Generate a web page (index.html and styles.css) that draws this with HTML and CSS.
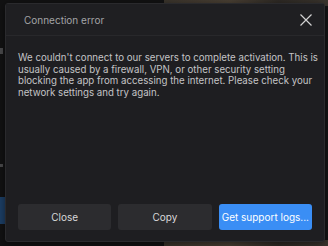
FILE: index.html
```html
<!DOCTYPE html>
<html lang="en">
<head>
    <meta charset="UTF-8">
    <meta name="viewport" content="width=device-width, initial-scale=1.0">
    <title>Connection error</title>
    <link rel="stylesheet" href="styles.css">
</head>
<body>
    <div class="app">
        <div class="sidebar">
            <div class="frag frag-a"></div>
            <div class="frag frag-b"></div>
            <div class="side-btn"></div>
        </div>
        <div class="canvas">
            <div class="photo"></div>
            <div class="canvas-mid"></div>
            <div class="photo"></div>
        </div>
    </div>

    <div class="dialog">
        <div class="dialog-header">
            <span class="dialog-title">Connection error</span>
            <button class="dialog-close" aria-label="Close">
                <svg width="12" height="12" viewBox="0 0 12 12">
                    <path d="M0.5 0.5 L11.5 11.5 M11.5 0.5 L0.5 11.5" stroke="#d2d2d2" stroke-width="1.2" fill="none"/>
                </svg>
            </button>
        </div>
        <div class="dialog-body">
            <p>We couldn't connect to our servers to complete activation. This is usually caused by a firewall, VPN, or other security setting blocking the app from accessing the internet. Please check your network settings and try again.</p>
        </div>
        <div class="dialog-actions">
            <button class="btn">Close</button>
            <button class="btn">Copy</button>
            <button class="btn btn-primary">Get support logs...</button>
        </div>
    </div>
</body>
</html>
```

FILE: styles.css
```css
* {
    margin: 0;
    padding: 0;
    box-sizing: border-box;
    font-family: Inter, 'Noto Sans', sans-serif;
}

body {
    width: 328px;
    height: 246px;
    background: #121213;
    overflow: hidden;
    position: relative;
}

.app {
    display: flex;
    height: 100%;
}

.sidebar {
    width: 164px;
    background: #121213;
}

.frag {
    width: 3px;
    height: 6px;
    background: #4a4a4c;
}

.frag-a {
    margin-top: 48px;
}

.frag-b {
    margin-top: 110px;
    height: 3px;
}

.side-btn {
    margin-top: 30px;
    width: 8px;
    height: 27px;
    background: #1d3f66;
}

.canvas {
    flex: 1;
    display: flex;
    flex-direction: column;
}

.photo {
    height: 6px;
    background: linear-gradient(90deg, #3a342c, #4a4034 40%, #2e2a25 70%, #3b352e);
}

.canvas-mid {
    flex: 1;
    background: #141415;
}

.dialog {
    position: absolute;
    left: 5px;
    top: 3px;
    width: 320px;
    height: 239px;
    background: #1e1e21;
    border: 1px solid #2a2a2d;
    border-radius: 3px;
    display: flex;
    flex-direction: column;
    box-shadow: 0 2px 8px rgba(0, 0, 0, 0.5);
}

.dialog-header {
    height: 32px;
    display: flex;
    align-items: center;
    justify-content: space-between;
    padding: 0 9px 0 18px;
    border-bottom: 1px solid #28282b;
    background: #1f1f22;
}

.dialog-title {
    color: #a3a3a6;
    font-size: 10px;
}

.dialog-close {
    background: none;
    border: none;
    width: 18px;
    height: 18px;
    display: flex;
    align-items: center;
    justify-content: center;
    margin-top: 1px;
}

.dialog-body {
    flex: 1;
    padding: 16px 4px 0 12px;
}

.dialog-body p {
    color: #c4c4c6;
    font-size: 9.7px;
    line-height: 11.7px;
}

.dialog-actions {
    display: flex;
    gap: 7px;
    padding: 0 12px 11px 12px;
}

.btn {
    flex: 1;
    height: 26px;
    border: none;
    border-radius: 3px;
    background: #2c2c2f;
    color: #d8d8da;
    font-size: 10px;
}

.btn-primary {
    background: #3a8ef5;
    color: #ffffff;
}
```
